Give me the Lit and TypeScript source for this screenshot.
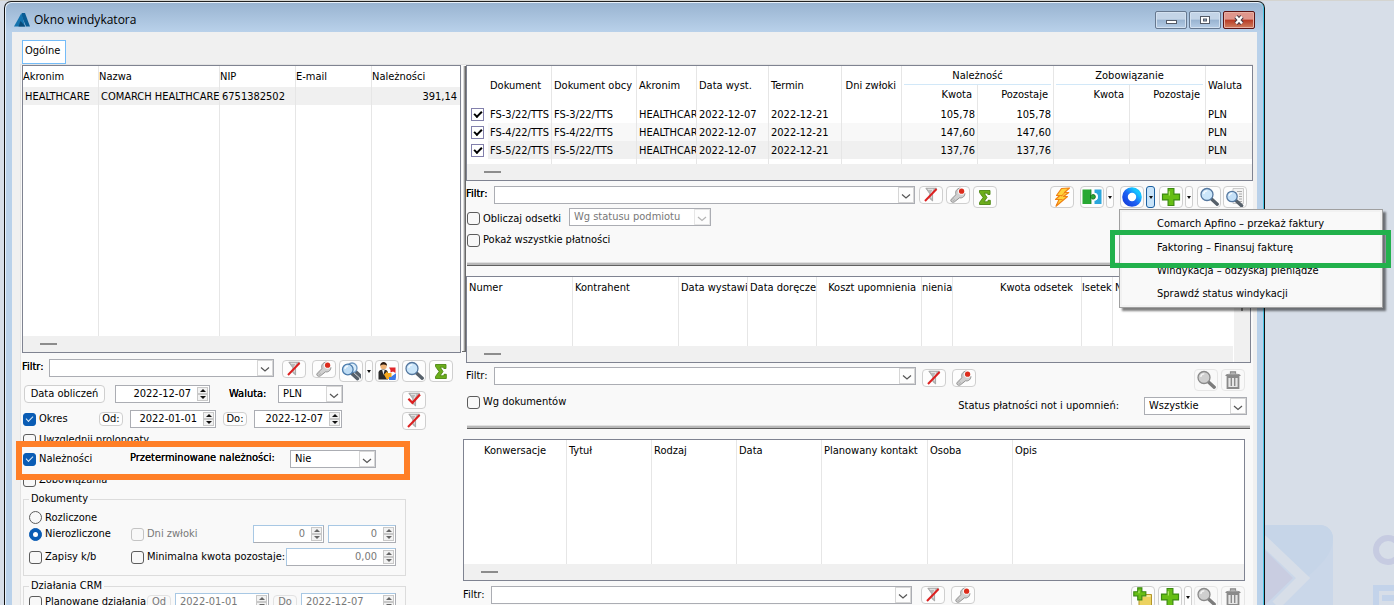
import { LitElement, html, svg, css } from "lit";
import { customElement, property } from "lit/decorators.js";

const baseText = css`
  *, *::before, *::after { box-sizing: border-box; }
  button, input, select {
    font: inherit;
    color: inherit;
    margin: 0;
    padding: 0;
    border-radius: 0;
    outline: none;
  }
`;

const lens = (x: number, y: number, r: number, fill: string, ring: string, handle: string) => svg`
  <path d="M${x + r * 0.7} ${y + r * 0.7}L${x + r * 0.7 + 6} ${y + r * 0.7 + 5.5}" stroke=${handle} stroke-width="3.4" stroke-linecap="round"/>
  <circle cx=${x} cy=${y} r=${r} fill=${fill} stroke=${ring} stroke-width="1.3"/>
  <path d="M${x - r * 0.55} ${y - r * 0.1}a${r * 0.6} ${r * 0.6} 0 0 1 ${r * 0.6} ${-r * 0.5}" stroke="#fff" stroke-width="1.4" fill="none" opacity=".8"/>`;

const funnel = svg`
  <path d="M3.500 1.500h13.500l-5 7v9l-3.500-3V8.500z" fill="#b9b9b9" stroke="#8d8d8d" stroke-width=".8"/>
  <path d="M6 3h6.500L10.300 8v6" stroke="#e8e8e8" stroke-width="1.200" fill="none"/>`;

const plus = (x: number, y: number, s: number) => {
  const a = s * 0.33;
  return svg`<path d="M${x + a} ${y}h${s - 2 * a}v${a}h${a}v${s - 2 * a}h${-a}v${a}h${-(s - 2 * a)}v${-a}h${-a}v${-(s - 2 * a)}h${a}z"
    fill="#66be14" stroke="#3c8a12" stroke-width="1.2"/>
    <path d="M${x + a + 1.2} ${y + a + 1.4}v${1.4 - a}" stroke="#b4ec6c" stroke-width="1.2"/>`;
};

const ICONS: Record<string, unknown> = {
  filterOff: svg`${funnel}<path d="M2.500 17.500L17 2.500" stroke="#dc2020" stroke-width="2.500"/>`,
  filterOn: svg`${funnel}<path d="M3 8.500l5 5L17.500 3" stroke="#dc2020" stroke-width="2.800" fill="none"/>`,
  wrench: svg`
    <path d="M2.500 18.800c-1.500-.5-2-2-1-3.400L7.500 9.500C6 5.500 8.500 1.800 13 1.300l-1.800 4 2.500 3.200 4.800-1c.5 4-2.800 6.800-6.600 6L6 18.200c-1 1-2.400 1.200-3.500.6z"
      fill="#d0d0d0" stroke="#858585" stroke-width="1.100"/>
    <circle cx="4.500" cy="16" r="1" fill="#fff" stroke="#858585" stroke-width=".6"/>
    <circle cx="14.500" cy="5.200" r="4.400" fill="#fff"/><circle cx="14.500" cy="5.200" r="3.300" fill="#dc2c1c"/>`,
  sigma: svg`<path d="M4.500 3.500h10.500v4h-2.200V6.200H9.200L12 10.500 9 14.800h4V13.300h2.300V17.500H4.500v-2l3.600-5L4.500 5.500z"
    fill="#6cae1c" stroke="#4c8612" stroke-width=".9"/>`,
  lens: lens(8, 7.500, 6, "#cbe6fa", "#54779f", "#56606a"),
  lensGray: lens(8, 7.500, 6, "#cfcfcf", "#8a8a8a", "#7c7c7c"),
  lensTwo: svg`${lens(11, 7, 5, "#d8ecfa", "#6d97c2", "#56606a")}${lens(6.800, 8.500, 5.300, "#bedcf4", "#4a7aaa", "#56606a")}`,
  lensPage: svg`
    <path d="M8 1.500h10.500v15H8z" fill="#f2f2f2" stroke="#c4c4c4" stroke-width=".9"/>
    <path d="M12 4.500h5M14 7h3M14 9.500h3M14 12h3M13 14.500h4" stroke="#a8a8a8" stroke-width="1"/>
    ${lens(7, 9.500, 5.200, "#c4e0f8", "#54779f", "#56606a")}`,
  bolt: svg`<path d="M9.500 1.500L17.500 1l-5 4.500h4.300l-5.300 4h4L4 19.200l3-6.700H3.500l4.200-4H4.500z"
    fill="#ffd23a" stroke="#f08214" stroke-width="1.200" stroke-linejoin="round"/>
    <path d="M6.500 8.500h4M6 12.500h4.500M13 5.500L9 9.300" stroke="#f08214" stroke-width=".9"/>`,
  puzzle: svg`
    <path d="M.5 2.500h8.500v14.500H.5z" fill="#28a833"/>
    <path d="M19.500 2.500h-7v3.300a4 4 0 0 1 0 7.900V17h7z" fill="#2aa6dc"/>
    <path d="M12.500 5.800a4 4 0 0 1 0 7.900z" fill="#fff"/>
    <path d="M8.500 8.300c1 .6 1.300-.8 2.600-.8a2.300 2.300 0 0 1 0 4.600c-1.300 0-1.600-1.400-2.600-.8z" fill="#28a833" stroke="#176a20" stroke-width=".9"/>
    <path d="M9 2.500v5.500M9 12v5" stroke="#127a24" stroke-width=".8"/>`,
  person: svg`
    <path d="M1.500 18.500v-7c0-2 2-3 4.700-3s4.700 1 4.700 3v7z" fill="#2b2b2b"/>
    <path d="M5.200 9l1.200 5L7.600 9z" fill="#f2f2f2"/>
    <circle cx="6.600" cy="5" r="3.200" fill="#f0b478"/><path d="M3.200 4.800c0-5 6.800-5 6.800 0-2-1.600-4.500-2-6.800 0z" fill="#2b1a10"/>
    <path d="M12 6.500h6.500V12l-2.500-1.500-2.500 1v-2.500z" fill="#e0262a"/>
    <path d="M18.500 19H12v-4l2 .8 5-3.500v4z" fill="#3c7ae6"/>
    <path d="M7 13.500l3.500-3.500v2h4v4h-2.500v2H9.500z" fill="#f7a81c"/>`,
  trash: svg`
    <path d="M7.500 3.500V1.800h5v1.700M3 5.500c0-2 14-2 14 0z" fill="#b8b8b8" stroke="#8a8a8a" stroke-width="1.200"/>
    <path d="M4.500 7h11v11h-11z" fill="#e6e6e6" stroke="#8a8a8a" stroke-width="1.800"/>
    <path d="M8.300 8v8M11.700 8v8" stroke="#8a8a8a" stroke-width="1.400"/>`,
  plus: plus(1.500, 1.500, 17),
  folderPlus: svg`
    <path d="M6 7.500h12.500v11.500H6z" fill="#ecd260" stroke="#b3962a" stroke-width="1"/>
    <path d="M8 9h9.500" stroke="#fbf0a8" stroke-width="1.500"/>${plus(.8, .8, 12)}`,
};

@customElement("tool-button")
class ToolButton extends LitElement {
  @property() icon = "";
  @property() label = "";
  @property({ type: Boolean, reflect: true }) low = false;
  @property({ type: Boolean, reflect: true }) off = false;

  static styles = [baseText, css`
    :host { display: block; flex: none; width: 24px; height: 22px; }
    :host([low]) { height: 18px; }
    button {
      display: grid;
      place-items: center;
      width: 100%;
      height: 100%;
      border: 1px solid #cfcfcf;
      border-radius: 4px;
      background: #fdfdfd;
      overflow: hidden;
    }
    :host([off]) button { border-color: #e6e6e6; background: #f9f9f9; }
    svg { display: block; width: 20px; height: 20px; }
    :host([low]) svg { width: 16px; height: 16px; }
  `];

  render() {
    const ring = svg`
      <defs><linearGradient id="ring" x1="1" y1="0" x2="0" y2="1">
        <stop offset=".15" stop-color="#14c4ff"/><stop offset=".55" stop-color="#1e62f4"/><stop offset="1" stop-color="#1440dc"/>
      </linearGradient></defs>
      <circle cx="10" cy="10" r="7" fill="#fff" stroke="url(#ring)" stroke-width="5.600"/>`;
    return html`<button aria-label=${this.label}>
      <svg viewBox="0 0 20 20" fill="none">${this.icon === "ring" ? ring : ICONS[this.icon]}</svg>
    </button>`;
  }
}

@customElement("drop-button")
class DropButton extends LitElement {
  static styles = [baseText, css`
    :host { display: block; flex: none; width: 8px; height: 22px; }
    button {
      display: grid;
      place-items: center;
      width: 100%;
      height: 100%;
      border: 1px solid #cfcfcf;
      border-radius: 3px;
      background: #fdfdfd;
    }
    button::after { content: ""; border: 2px solid transparent; border-top: 3px solid #111; border-bottom: 0; }
    :host([open]) { width: 9px; }
    :host([open]) button { border-color: #1a5fa0; background: #c8e4fa; }
  `];
  render() {
    return html`<button aria-label="Rozwiń"></button>`;
  }
}

const chevron = html`<svg class="chev" viewBox="0 0 14 14" fill="none"><path d="M3 6.500l4 3.500 4-3.500" stroke="#555" stroke-width="1.200"/></svg>`;

type Col = { t: string; w?: number; kind?: string };

@customElement("app-root")
class AppRoot extends LitElement {
  static styles = [baseText, css`
    :host {
      display: block;
      position: relative;
      box-sizing: border-box;
      height: 100vh;
      overflow: hidden;
      background: #d7dee8;
      border-top: 1px solid #d4d4d0;
      padding: 0 129px 0 4px;
      font: 11px/14px "DejaVu Sans Condensed", "DejaVu Sans", sans-serif;
      color: #000;
    }
    .logo { position: absolute; right: 0; bottom: 0; width: 132px; height: 82px; }

    .window {
      position: relative;
      border: 1px solid #111;
      border-top-color: #222;
      border-radius: 7px 7px 0 0;
      background: #b9d1ea;
      box-shadow: inset 1px 1px 0 #e8f1fa, inset -1px 0 0 #46c4e4;
      padding: 1px 7px 0;
      min-height: 110vh;
    }
    .titlebar {
      display: flex;
      align-items: center;
      gap: 4px;
      height: 29px;
      margin: 0 -6px;
      padding: 5px 8px 0 8px;
      border-radius: 6px 6px 0 0;
      background: linear-gradient(#99b4d1, #b9d1ea);
    }
    .titlebar svg.mark { width: 16px; height: 16px; }
    .titlebar h1 { flex: 1; margin: 0; font: 12px/16px "Open Sans", sans-serif; }
    .caption { display: flex; gap: 2px; padding-bottom: 1px; }
    .caption button {
      display: grid;
      place-items: center;
      width: 32px;
      height: 18px;
      border: 1px solid #66788f;
      border-radius: 2px;
      background: linear-gradient(#c3d4e7 45%, #98b3d0 50%, #b6cde6);
      box-shadow: inset 0 0 0 1px #d3e1f0;
    }
    .caption .close {
      border-color: #5c1414;
      background: linear-gradient(#e0968c 45%, #b83a24 50%, #d08060);
      box-shadow: inset 0 0 0 1px #e8b0a4;
    }
    .caption svg { width: 14px; height: 10px; }

    .client { background: #f0f0f0; padding: 8px 4px 0 8px; min-height: 110vh; }
    .tab {
      display: block;
      height: 24px;
      margin-left: 2px;
      padding: 0 6px 3px 2px;
      width: 44px;
      border: 1px solid #74bcf8;
      background: #fff;
    }
    .panel {
      display: grid;
      grid-template-columns: 439px 5px minmax(0, 1fr);
      align-items: start;
      border: 1px solid #e3e3e3;
      border-right: 0;
      background: #f9f9f9;
      padding-left: 1px;
      min-height: 110vh;
    }
    .vsplit {
      height: 286px;
      margin: 1px 0 0 1px;
      border: solid #696969;
      border-width: 0 1px 1px 0;
      background: linear-gradient(90deg, #fff 1px, #dcdcdc 1px 2px, #a0a0a0 2px);
    }
    .hsplit {
      height: 4px;
      margin: 0 3px 10px 1px;
      background: linear-gradient(#e0e0e0 1px, #b8b8b8 1px 3px, #606060 3px);
    }

    .grid {
      display: grid;
      grid-template: minmax(0, 1fr) 16px / minmax(0, 1fr);
      border: 1px solid #7f8391;
      background: #fff;
    }
    .grid.clients { height: 288px; }
    .grid.docs { height: 116px; }
    .grid.notes { grid-template-columns: minmax(0, 1fr) 17px; height: 87px; margin-right: 2px; }
    .grid.talks { height: 142px; margin: 0 8px 0 -3px; }
    .bar { display: flex; align-items: center; padding-left: 17px; background: #f0f0f0; }
    .bar::before { content: ""; width: 17px; height: 2px; background: #8c8c8c; }
    .vbar { grid-area: 1 / 2 / 3 / 3; background: #f0f0f0; border-left: 1px solid #fff; padding: 20px 7px; }
    .vbar::before { content: ""; display: block; width: 2px; height: 14px; background: #8c8c8c; }

    table { width: 100%; height: 100%; table-layout: fixed; border-spacing: 0; }
    th, td {
      padding: 0 2px;
      border-right: 1px solid #e6e6e6;
      overflow: hidden;
      white-space: nowrap;
      text-align: left;
      font-weight: normal;
      text-overflow: clip;
    }
    td { padding-top: 2px; }
    th:last-child, td:last-child, th.plain, td.plain { border-right-color: transparent; }
    thead tr { height: 22px; }
    .clients thead tr { height: 21px; }
    .clients th { padding: 0; }
    .docs thead tr { height: 19px; }
    .docs thead tr + tr { height: 20px; }
    .docs thead th { border-right-color: #e6e6e6; }
    .docs thead th:first-child { border-right-color: #fff; }
    .docs thead tr + tr th:first-child { border-right-color: #e6e6e6; }
    .docs thead th.end { border-right-color: #fff; }
    tbody tr { height: 18px; }
    tbody tr.rest { height: auto; }
    tr.alt td:not(.tick) { background: #f8f8f8; }
    tr.sel td:not(.tick) { background: #f0f0f0; }
    th.num, td.num { text-align: right; }
    th.num { padding-right: 5px; }
    th.wide { padding-right: 8px; text-align: right; }
    th.tight { padding: 0; }
    th.first { padding-left: 20px; }
    th.group { padding: 0 2px; text-align: center; }
    th.group span { display: block; height: 19px; line-height: 19px; border-bottom: 1px solid #d2e8f8; }
    td.tick { padding: 0 4px; border-right: 0; line-height: 0; }

    .line { display: flex; align-items: flex-start; }
    .filter-label { flex: none; padding-top: 1px; text-shadow: 0 0 currentColor; }
    .filter-label.left { width: 27px; }
    .filter-label.main { width: 28px; }
    .mid .filter-label, .low .filter-label { padding-top: 2px; text-shadow: none; }
    .combo { display: flex; flex: 1; min-width: 0; height: 18px; border: 1px solid #abadb3; background: #fff; }
    .combo input { flex: 1; min-width: 0; border: 0; background: none; }
    .combo button { display: grid; place-items: center; width: 16px; border: 1px solid #d6d6d6; background: #fdfdfd; }
    .chev { display: block; width: 14px; height: 14px; }
    .set { display: flex; flex: none; }
    .g2 { gap: 2px; } .g3 { gap: 3px; } .g4 { gap: 4px; } .g6 { gap: 6px; }
    .anchor { position: relative; }

    .pick {
      appearance: none;
      height: 18px;
      padding: 0 18px 0 4px;
      border: 1px solid #abadb3;
      background: #fff url('data:image/svg+xml,<svg xmlns="http://www.w3.org/2000/svg" width="16" height="16"><rect x=".5" y=".5" width="15" height="15" fill="%23fdfdfd" stroke="%23d6d6d6"/><path d="M4 8l4 3.500 4-3.500" fill="none" stroke="%23555" stroke-width="1.200"/></svg>') no-repeat right center;
    }
    .pick:disabled, .dim { color: #787878; opacity: 1; }
    .pick:disabled {
      background-image: url('data:image/svg+xml,<svg xmlns="http://www.w3.org/2000/svg" width="16" height="16"><rect x=".5" y=".5" width="15" height="15" fill="%23fdfdfd" stroke="%23e6e6e6"/><path d="M4 8l4 3.500 4-3.500" fill="none" stroke="%23b4b4b4" stroke-width="1.200"/></svg>');
    }

    label.check { display: flex; align-items: center; gap: 3px; white-space: nowrap; }
    input[type="checkbox"], input[type="radio"] {
      appearance: none;
      display: grid;
      place-items: center;
      flex: none;
      width: 13px;
      height: 13px;
      border: 1px solid #5c5c5c;
      border-radius: 3px;
      background: #f8f8f8;
    }
    input[type="radio"] { border-radius: 50%; }
    input[type="checkbox"]:disabled { border-color: #c4c4c4; }
    input[type="checkbox"]:checked, input[type="radio"]:checked { border-color: #0a5cb4; background: #0a5cb4; }
    input[type="checkbox"]:checked::after {
      content: "";
      width: 7px;
      height: 4px;
      margin-bottom: 2px;
      border: solid #dcecfa;
      border-width: 0 0 1px 1px;
      transform: rotate(-45deg);
    }
    input[type="radio"]:checked::after { content: ""; width: 5px; height: 5px; border-radius: 50%; background: #fff; }
    .tick input[type="checkbox"], .tick input[type="checkbox"]:checked { border: 1px solid #8280ac; border-radius: 0; background: #fff; }
    .tick input[type="checkbox"]:checked::after { border-color: #000; border-width: 0 0 2px 2px; width: 8px; height: 5px; }

    .spin { display: flex; flex: none; height: 18px; border: 1px solid #abadb3; background: #fff; padding: 1px; }
    .spin input { flex: 1; min-width: 0; border: 0; background: none; text-align: right; padding-right: 6px; }
    .spin .arrows { display: grid; grid-template-rows: 1fr 1fr; width: 11px; }
    .spin .arrows button { display: grid; place-items: center; border: 1px solid #c8c8c8; background: #f2f2f2; }
    .spin .arrows button::after { content: ""; border: 3px solid transparent; border-bottom-color: #111; border-top: 0; }
    .spin .arrows button + button::after { border: 3px solid transparent; border-top-color: #111; border-bottom: 0; }
    .spin.dim { border-color: #a8c8e4 #abadb3 #abadb3 #a8c8e4; }
    .spin.dim .arrows button::after { border-bottom-color: #666; }
    .spin.dim .arrows button + button::after { border-bottom-color: transparent; border-top-color: #666; }
    .w68 { width: 68px; } .w71 { width: 71px; } .w110 { width: 110px; }

    .push { height: 18px; border: 1px solid #cfcfcf; border-radius: 4px; background: #fdfdfd; white-space: nowrap; }
    .push.small { width: 24px; height: 14px; margin-top: 2px; line-height: 12px; }
    .push.dim { border-color: #e2e2e2; background: #f9f9f9; }
    .strong { text-shadow: 0 0 currentColor; white-space: nowrap; }

    .left .line.top { padding-top: 6px; margin-bottom: 3px; height: 29px; }
    .left .top .combo { flex: none; width: 225px; }
    .fields { display: grid; grid-template-columns: 320px 24px; column-gap: 60px; }
    .fields .rows { display: grid; gap: 7px; align-content: start; }
    .fields .side { display: grid; gap: 3px; padding-top: 6px; align-content: start; }
    .calc { display: grid; grid-template-columns: 81px 95px 48px 65px; padding-left: 2px; column-gap: 10px; }
    .calc label { padding: 2px 0 0 9px; }
    .period { display: grid; grid-template-columns: 69px 24px 86px 24px 88px; column-gap: 7px; padding-left: 1px; }
    .period > label { height: 18px; }
    .stack { padding: 1px 0 0 1px; }
    .stack .check { height: 18px; }
    .due { position: relative; display: grid; grid-template-columns: 107px 160px 86px; margin: 1px 0 3px; width: 353px; }
    .due .strong { padding-top: 1px; }
    .due::after { content: ""; position: absolute; top: -9px; left: -7px; width: 394px; height: 39px; border: 6px solid #ff7f27; pointer-events: none; }

    fieldset { width: 383px; margin: 3px 0 2px 1px; padding: 4px 9px 9px 5px; border: 1px solid #dcdcdc; min-width: 0; }
    fieldset + fieldset { padding-top: 0; }
    legend { padding: 0 2px; height: 14px; }
    .two, .three { display: grid; grid-template-columns: 98px minmax(0, 1fr) auto auto; column-gap: 4px; align-items: center; }
    .three { grid-template-columns: 98px minmax(0, 1fr) auto; }
    .r15 { height: 15px; } .r18 { height: 18px; } .r18 + .r18 { margin-top: 5px; }
    .crm { display: grid; grid-template-columns: 114px 24px 94px 24px 95px; column-gap: 4px; height: 18px; }
    .crm .spin input { text-align: left; padding-left: 3px; }

    .head { padding: 5px 6px 0 0; }
    .head .wide-gap { margin-left: 53px; }
    .options { height: 21px; }
    .options .check { width: 103px; height: 21px; }
    .all { height: 22px; margin-bottom: 11px; align-items: center; }
    .main .check { padding-left: 1px; }
    .mid { padding: 4px 8px 0 0; height: 28px; }
    .low { padding: 5px 8px 0 0; margin-left: -3px; }
    .drop2 { padding-top: 2px; }
    .status { height: 34px; padding-right: 6px; justify-content: space-between; }
    .status > .check { height: 22px; }
    .status .set { padding-top: 6px; align-items: center; gap: 25px; }
    .status .pick { width: 103px; }

    .menu {
      position: absolute;
      z-index: 5;
      top: 23px;
      left: -1px;
      width: 264px;
      margin: 0;
      padding: 2px;
      list-style: none;
      border: 1px solid #a0a0a0;
      background: #f9f9f9;
      box-shadow: inset 0 0 0 2px #f2f2f2, 3px 3px 2px #00000080;
    }
    .menu li { position: relative; height: 23px; }
    .menu li.marked { z-index: 1; }
    .menu button { width: 100%; height: 23px; padding-left: 35px; border: 0; background: none; text-align: left; }
    .menu li:first-child, .menu li:first-child button { height: 24px; }
    .menu li.marked::after {
      content: "";
      position: absolute;
      inset: -6px -11px -9px -12px;
      border: 5px solid #22b14c;
      pointer-events: none;
    }
  `];

  private combo(id: string) {
    return html`<div class="combo"><input id=${id} type="text" /><button aria-label="Rozwiń filtr">${chevron}</button></div>`;
  }

  private spin(label: string, value: string, width = "", dim = false) {
    return html`<div class="spin ${width} ${dim ? "dim" : ""}">
      <input aria-label=${label} .value=${value} ?readonly=${dim} />
      <div class="arrows"><button aria-label="Więcej"></button><button aria-label="Mniej"></button></div>
    </div>`;
  }

  private check(text: string, on = false, dim = false) {
    return html`<label class="check ${dim ? "dim" : ""}"><input type="checkbox" .checked=${on} ?disabled=${dim} />${text}</label>`;
  }

  private simpleTable(cols: Col[]) {
    return html`<table>
      <colgroup>${cols.map((c) => html`<col style=${c.w ? `width:${c.w}px` : ""} />`)}</colgroup>
      <thead><tr>${cols.map((c) => html`<th class=${c.kind ?? ""}>${c.t}</th>`)}</tr></thead>
      <tbody><tr class="rest">${cols.map(() => html`<td></td>`)}</tr></tbody>
    </table>`;
  }

  private clients() {
    return html`<div class="grid clients">
      <table>
        <colgroup>${[76, 121, 76, 76].map((w) => html`<col style="width:${w}px" />`)}<col /></colgroup>
        <thead><tr><th>Akronim</th><th>Nazwa</th><th>NIP</th><th>E-mail</th><th>Należności</th></tr></thead>
        <tbody>
          <tr class="sel"><td>HEALTHCARE</td><td>COMARCH HEALTHCARE</td><td>6751382502</td><td></td><td class="num">391,14</td></tr>
          <tr class="rest"><td></td><td></td><td></td><td></td><td></td></tr>
        </tbody>
      </table>
      <div class="bar"></div>
    </div>`;
  }

  private docs() {
    const rows = [["FS-3/22/TTS", "105,78"], ["FS-4/22/TTS", "147,60"], ["FS-5/22/TTS", "137,76"]];
    return html`<div class="grid docs">
      <table>
        <colgroup>${[21, 64, 85, 60, 72, 73, 60, 76, 76, 76, 76].map((w) => html`<col style="width:${w}px" />`)}<col /></colgroup>
        <thead>
          <tr>
            <th rowspan="2"></th><th rowspan="2">Dokument</th><th rowspan="2">Dokument obcy</th><th rowspan="2">Akronim</th>
            <th rowspan="2">Data wyst.</th><th rowspan="2">Termin</th><th rowspan="2" class="num">Dni zwłoki</th>
            <th colspan="2" class="group"><span>Należność</span></th><th colspan="2" class="group"><span>Zobowiązanie</span></th>
            <th rowspan="2" class="end">Waluta</th>
          </tr>
          <tr><th class="num">Kwota</th><th class="num">Pozostaje</th><th class="num">Kwota</th><th class="num">Pozostaje</th></tr>
        </thead>
        <tbody>
          ${rows.map(([d, k], i) => html`<tr class=${["", "alt", "sel"][i]}>
            <td class="tick"><input type="checkbox" aria-label=${d} .checked=${true} /></td>
            <td>${d}</td><td>${d}</td><td>HEALTHCARE</td><td>2022-12-07</td><td>2022-12-21</td><td></td>
            <td class="num">${k}</td><td class="num">${k}</td><td></td><td></td><td>PLN</td>
          </tr>`)}
          <tr class="rest"><td class="plain"></td>${Array.from({ length: 11 }, () => html`<td></td>`)}</tr>
        </tbody>
      </table>
      <div class="bar"></div>
    </div>`;
  }

  private left() {
    return html`<section class="left">
      ${this.clients()}
      <div class="line top">
        <label class="filter-label left" for="f1">Filtr:</label>${this.combo("f1")}
        <div class="set g6" style="padding:1px 0 0 8px">
          <tool-button low icon="filterOff" label="Wyczyść filtr"></tool-button>
          <tool-button low icon="wrench" label="Konstruktor filtra"></tool-button>
        </div>
        <div class="set g3" style="padding:1px 0 0 3px">
          <div class="set g2">
            <tool-button icon="lensTwo" label="Podgląd"></tool-button><drop-button></drop-button>
            <tool-button icon="person" label="Kontrahent"></tool-button>
          </div>
          <tool-button icon="lens" label="Szukaj"></tool-button>
          <tool-button icon="sigma" label="Suma"></tool-button>
        </div>
      </div>
      <div class="fields">
        <div class="rows">
          <div class="calc">
            <button class="push">Data obliczeń</button>
            ${this.spin("Data obliczeń", "2022-12-07")}
            <label class="strong" for="cur">Waluta:</label>
            <select class="pick" id="cur"><option>PLN</option></select>
          </div>
          <div class="period">
            ${this.check("Okres", true)}
            <button class="push small">Od:</button>${this.spin("Od", "2022-01-01")}
            <button class="push small">Do:</button>${this.spin("Do", "2022-12-07")}
          </div>
        </div>
        <div class="side">
          <tool-button low icon="filterOn" label="Zastosuj filtr"></tool-button>
          <tool-button low icon="filterOff" label="Usuń filtr"></tool-button>
        </div>
      </div>
      <div class="stack">
        ${this.check("Uwzględnij prolongaty")}
        <div class="due">
          ${this.check("Należności", true)}
          <label class="strong" for="due">Przeterminowane należności:</label>
          <select class="pick" id="due"><option>Nie</option></select>
        </div>
        ${this.check("Zobowiązania")}
      </div>
      <fieldset>
        <legend>Dokumenty</legend>
        <label class="check r15"><input type="radio" name="docs" />Rozliczone</label>
        <div class="two r18">
          <label class="check"><input type="radio" name="docs" checked />Nierozliczone</label>
          ${this.check("Dni zwłoki", false, true)}
          ${this.spin("Dni zwłoki od", "0", "w71", true)}${this.spin("Dni zwłoki do", "0", "w68", true)}
        </div>
        <div class="three r18">
          ${this.check("Zapisy k/b")}${this.check("Minimalna kwota pozostaje:")}
          ${this.spin("Minimalna kwota", "0,00", "w110", true)}
        </div>
      </fieldset>
      <fieldset>
        <legend>Działania CRM</legend>
        <div class="crm">
          ${this.check("Planowane działania")}
          <button class="push small dim">Od</button>${this.spin("Od", "2022-01-01", "", true)}
          <button class="push small dim">Do</button>${this.spin("Do", "2022-12-07", "", true)}
        </div>
      </fieldset>
    </section>`;
  }

  private filterPair(gap: string) {
    return html`<div class="set ${gap}">
      <tool-button low icon="filterOff" label="Wyczyść filtr"></tool-button>
      <tool-button low icon="wrench" label="Konstruktor filtra"></tool-button>
    </div>`;
  }

  private main() {
    const notes: Col[] = [
      { t: "Numer", w: 106 }, { t: "Kontrahent", w: 106 }, { t: "Data wystawi", w: 69 }, { t: "Data doręcze", w: 69 },
      { t: "Koszt upomnienia", w: 105, kind: "num" }, { t: "nienia", w: 31, kind: "tight" }, { t: "Kwota odsetek", w: 129, kind: "wide" },
      { t: "lsetek", w: 31, kind: "tight" }, { t: "N" },
    ];
    const talks: Col[] = [
      { t: "Konwersacje", w: 103, kind: "first" }, { t: "Tytuł", w: 85 }, { t: "Rodzaj", w: 85 }, { t: "Data", w: 85 },
      { t: "Planowany kontakt", w: 106 }, { t: "Osoba", w: 85 }, { t: "Opis" },
    ];
    return html`<section class="main">
      ${this.docs()}
      <div class="line head">
        <label class="filter-label main" for="f2">Filtr:</label>${this.combo("f2")}
        <div class="set g3" style="padding-left:4px">
          ${this.filterPair("g3")}
          <tool-button icon="sigma" label="Suma"></tool-button>
        </div>
        <div class="set g6 wide-gap">
          <tool-button icon="bolt" label="Akcja"></tool-button>
          <div class="set g2"><tool-button icon="puzzle" label="Rozlicz"></tool-button><drop-button></drop-button></div>
          <div class="set g4">
            <div class="set g2 anchor">
              <tool-button icon="ring" label="Comarch Apfino"></tool-button><drop-button open></drop-button>
              <ul class="menu">
                <li><button>Comarch Apfino – przekaż faktury</button></li>
                <li class="marked"><button>Faktoring – Finansuj fakturę</button></li>
                <li><button>Windykacja – odzyskaj pieniądze</button></li>
                <li><button>Sprawdź status windykacji</button></li>
              </ul>
            </div>
            <div class="set g2"><tool-button icon="plus" label="Dodaj"></tool-button><drop-button></drop-button></div>
            <div class="set g2"><tool-button icon="lens" label="Podgląd"></tool-button><tool-button icon="lensPage" label="Podgląd dokumentu"></tool-button></div>
          </div>
        </div>
      </div>
      <div class="line options">
        ${this.check("Obliczaj odsetki")}
        <select class="pick" style="width:142px" aria-label="Sposób liczenia odsetek" disabled><option>Wg statusu podmiotu</option></select>
      </div>
      <div class="line all">${this.check("Pokaż wszystkie płatności")}</div>
      <div class="hsplit"></div>
      <div class="grid notes">${this.simpleTable(notes)}<div class="bar"></div><div class="vbar"></div></div>
      <div class="line mid">
        <label class="filter-label main" for="f3">Filtr:</label>${this.combo("f3")}
        <div class="drop2" style="padding-left:6px">${this.filterPair("g6")}</div>
        <div class="set g3 drop2" style="margin-left:218px">
          <tool-button off icon="lensGray" label="Podgląd"></tool-button><tool-button off icon="trash" label="Usuń"></tool-button>
        </div>
      </div>
      <div class="line status">
        ${this.check("Wg dokumentów")}
        <div class="set">
          <label for="st">Status płatności not i upomnień:</label>
          <select class="pick" id="st"><option>Wszystkie</option></select>
        </div>
      </div>
      <div class="hsplit"></div>
      <div class="grid talks">${this.simpleTable(talks)}<div class="bar"></div></div>
      <div class="line low">
        <label class="filter-label main" for="f4">Filtr:</label>${this.combo("f4")}
        <div style="padding-left:9px">${this.filterPair("g6")}</div>
        <div class="set g3" style="margin-left:156px">
          <tool-button icon="folderPlus" label="Dodaj grupę"></tool-button>
          <div class="set g2"><tool-button icon="plus" label="Dodaj"></tool-button><drop-button></drop-button><tool-button off icon="lensGray" label="Podgląd"></tool-button></div>
          <tool-button off icon="trash" label="Usuń"></tool-button>
        </div>
      </div>
    </section>`;
  }

  render() {
    return html`
      <svg class="logo" viewBox="0 0 132 82" fill="none" aria-hidden="true">
        <path d="M0 2h59a13 13 0 0 1 12 13v67H0z" fill="#cad7e9"/>
        <path d="M0 2h59a13 13 0 0 1 12 13c0 16-12 27-28 41L0 16z" fill="#c6d5e8"/>
        <path d="M0 24l31 31L3 82H0z" fill="#c9cde1"/>
        <path d="M0 16l41 39-27 27" stroke="#d7dee8" stroke-width="10"/>
        <circle cx="126" cy="27" r="12" stroke="#c6cbe1" stroke-width="6"/>
        <path d="M132 65h-18v17M132 75h-12" stroke="#c3d3ea" stroke-width="6"/>
      </svg>
      <main class="window">
        <header class="titlebar">
          <svg class="mark" viewBox="0 0 16 16"><path d="M8 1h3l5 13.500h-4L8 5z" fill="#0b5c94"/><path d="M7.500 1L11 14.500H0z" fill="#1473ae"/><path d="M6.500 9L4.500 14.500h7z" fill="#0a4a78"/></svg>
          <h1>Okno windykatora</h1>
          <div class="caption">
            <button aria-label="Minimalizuj"><svg viewBox="0 0 14 10"><rect x="2.500" y="5.500" width="10" height="3" fill="#fff" stroke="#535a66"/></svg></button>
            <button aria-label="Maksymalizuj"><svg viewBox="0 0 14 10"><rect x="2.500" y="1.500" width="9" height="7" fill="#fff" stroke="#535a66"/><rect x="5.500" y="4" width="3" height="2" fill="#9bb4d0" stroke="#535a66"/></svg></button>
            <button class="close" aria-label="Zamknij"><svg viewBox="0 0 14 10"><path d="M4 1.500l6 7M10 1.500l-6 7" stroke="#4a3a44" stroke-width="4.400"/><path d="M4 1.500l6 7M10 1.500l-6 7" stroke="#fff" stroke-width="2.400"/></svg></button>
          </div>
        </header>
        <div class="client">
          <button class="tab">Ogólne</button>
          <div class="panel">${this.left()}<div class="vsplit"></div>${this.main()}</div>
        </div>
      </main>`;
  }
}
